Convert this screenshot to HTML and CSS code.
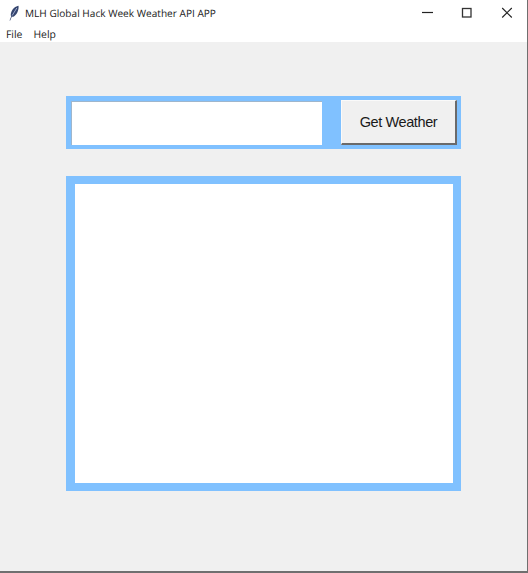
FILE: index.html
```html
<!DOCTYPE html>
<html lang="en">
<head>
<meta charset="utf-8">
<title>MLH Global Hack Week Weather API APP</title>
<link rel="stylesheet" href="styles.css">
</head>
<body>
<div class="window">
  <header class="titlebar">
    <svg class="app-icon" width="16" height="16" viewBox="0 0 16 16" aria-hidden="true">
      <path d="M3.5 15.5 L5.2 11.5 C4.2 10 5 5.5 8 3 C9.5 1.8 11.5 0.8 12.5 0.8 C13 4 11.5 9 8.5 11 C7.5 11.8 6.5 12 5.8 11.8 L4.2 15.5 Z" fill="#36466f"/>
      <path d="M6.2 10.5 L10.8 3" stroke="#a9b6d8" stroke-width="0.9" fill="none"/>
    </svg>
    <span class="title">MLH Global Hack Week Weather API APP</span>
    <div class="controls">
      <svg class="ctl" width="40" height="26" viewBox="0 0 40 26" aria-hidden="true"><path d="M15 12.5 H26" stroke="#222" stroke-width="1.2"/></svg>
      <svg class="ctl" width="40" height="26" viewBox="0 0 40 26" aria-hidden="true"><rect x="15.5" y="8.5" width="8.5" height="8.5" fill="none" stroke="#333" stroke-width="1.3"/></svg>
      <svg class="ctl" width="40" height="26" viewBox="0 0 40 26" aria-hidden="true"><path d="M15.2 8 L24.8 17.5 M24.8 8 L15.2 17.5" stroke="#222" stroke-width="1.1"/></svg>
    </div>
  </header>
  <nav class="menubar">
    <span class="menu-item">File</span>
    <span class="menu-item">Help</span>
  </nav>
  <main class="content">
    <section class="search-frame">
      <div class="entry"></div>
      <button class="get-btn" type="button">Get Weather</button>
    </section>
    <section class="result-frame">
      <div class="result"></div>
    </section>
  </main>
</div>
</body>
</html>
```
FILE: styles.css
```css
* { box-sizing: border-box; }
html, body { margin: 0; padding: 0; }
body {
  width: 528px;
  height: 573px;
  overflow: hidden;
  font-family: "Open Sans", "Noto Sans", sans-serif;
  text-rendering: geometricPrecision;
  background: #f0f0f0;
}
.window {
  width: 528px;
  height: 573px;
  display: flex;
  flex-direction: column;
  border-right: 1px solid #6f6f6f;
  border-bottom: 2px solid #6f6f6f;
}
.titlebar {
  height: 26px;
  display: flex;
  align-items: center;
  background: #fff;
  padding-left: 6px;
  flex: none;
}
.app-icon { flex: none; }
.title {
  margin-left: 3px;
  font-size: 10.1px;
  color: #1a1a1a;
  white-space: nowrap;
}
.controls { margin-left: auto; display: flex; }
.ctl { display: block; }
.menubar {
  height: 16px;
  display: flex;
  align-items: center;
  gap: 11px;
  background: #fff;
  padding: 2px 0 0 6px;
  font-size: 10.4px;
  color: #1a1a1a;
  flex: none;
}
.content {
  flex: 1;
  background: #f0f0f0;
  padding: 54px 66px 0;
  display: flex;
  flex-direction: column;
  gap: 27px;
}
.search-frame {
  width: 395px;
  height: 53px;
  background: #80c1ff;
  display: flex;
  align-items: stretch;
  padding: 4px 4px 4px 5px;
  justify-content: space-between;
}
.entry {
  width: 251px;
  margin-top: 1px;
  background: #fff;
  border-top: 1px solid #9fb6cc;
  border-left: 1px solid #9fb6cc;
}
.get-btn {
  width: 116px;
  padding: 0;
  background: #f0f0f0;
  border-style: solid;
  border-width: 1px 2px 2px 1px;
  border-color: #fafafa #6a6a6a #6a6a6a #fafafa;
  font-family: "Liberation Sans", Arial, sans-serif;
  font-size: 14.5px;
  letter-spacing: -0.4px;
  color: #1a1a1a;
}
.result-frame {
  width: 395px;
  height: 315px;
  background: #80c1ff;
  padding: 8px 8px 8px 9px;
}
.result { width: 100%; height: 100%; background: #fff; }
```
